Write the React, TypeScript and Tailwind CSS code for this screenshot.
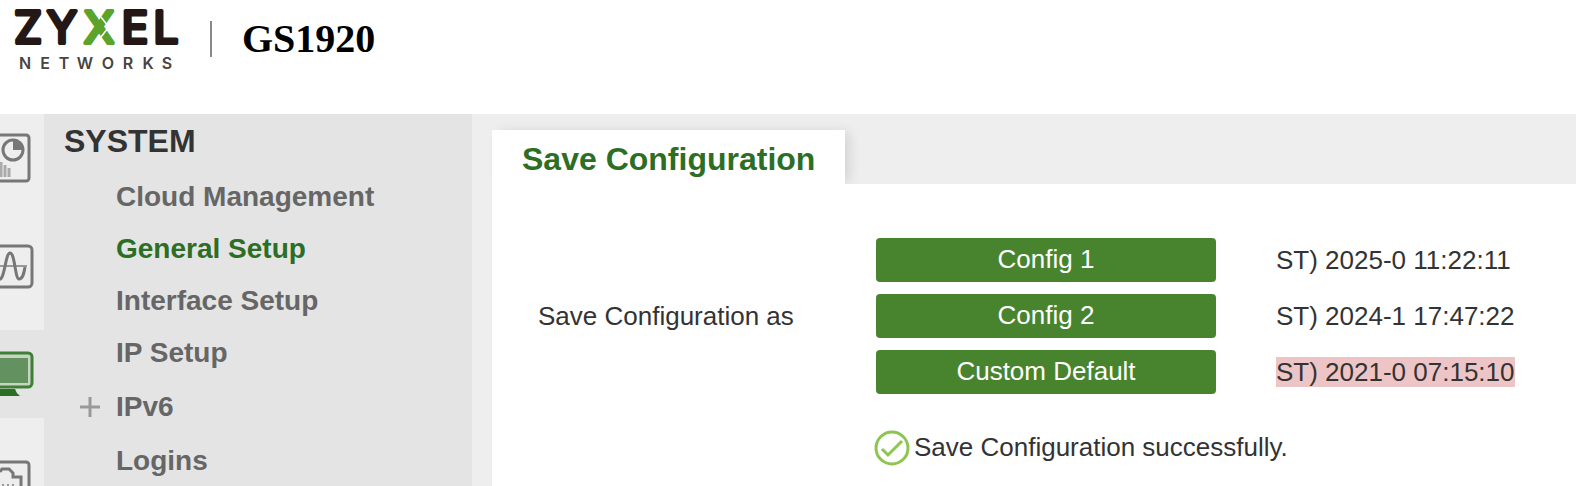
import { useState } from "react";
import clsx from "clsx";

const MENU_ITEMS = [
    { name: "Cloud Management" },
    { name: "General Setup" },
    { name: "Interface Setup" },
    { name: "IP Setup" },
    { name: "IPv6", expandable: true },
    { name: "Logins" },
];

const CONFIGS = [{
    name: "Config 1",
    savedAt: "ST) 2025-0 11:22:11",
}, {
    name: "Config 2",
    savedAt: "ST) 2024-1 17:47:22",
}, {
    name: "Custom Default",
    savedAt: "ST) 2021-0 07:15:10",
    highlight: true,
}];

const Logo = () => (
    <svg width="182" height="74" viewBox="0 0 182 74" role="img" aria-label="Zyxel Networks" className="shrink-0">
        <g fontFamily="Inter, sans-serif" fontSize="44" textAnchor="middle" fill="#231815" stroke="#231815" strokeWidth="4" strokeLinejoin="round">
            <text x="28" y="43">Z</text>
            <text x="62" y="43">Y</text>
            <text x="99" y="43" fill="#5ba32b" stroke="#5ba32b">X</text>
            <text x="135" y="43">E</text>
            <text x="166" y="43">L</text>
        </g>
        <path d="M101 17l7 9M108 28l-7 9" fill="none" stroke="#fff" strokeWidth="1.5" />
        <g fontFamily="Inter, sans-serif" fontSize="16" fontWeight="600" textAnchor="middle" fill="#4a4340">
            <text x="25 45 64 85 108 128 148 167" y="69">NETWORKS</text>
        </g>
    </svg>
);

// The rail icons run off the left edge of the window
const DashboardIcon = () => (
    <svg width="44" height="88" viewBox="0 0 44 88" fill="none" stroke="#777" strokeWidth="3">
        <rect x="-30" y="21" width="59" height="46" rx="3" />
        <circle cx="13" cy="36" r="10" strokeWidth="3" />
        <path d="M13 36V26a10 10 0 0 1 10 10z" fill="#777" stroke="none" />
        <path d="M1 48v15M5 51v12M9 54v9" stroke="#aaa" strokeWidth="3" />
    </svg>
);

const MonitorIcon = () => (
    <svg width="44" height="88" viewBox="0 0 44 88" fill="none" stroke="#777" strokeWidth="3">
        <rect x="-30" y="24" width="62" height="41" rx="4" />
        <path d="M0 44h27" stroke="#999" strokeWidth="2" />
        <path d="M-2 57C5 61 5 31 10 31S15 57 19 57s5-6 6-12" strokeWidth="3" />
    </svg>
);

const SystemIcon = () => (
    <svg width="44" height="88" viewBox="0 0 44 88">
        <rect x="-30" y="23" width="62" height="34" rx="4" fill="#c5d5c2" stroke="#3f7f36" strokeWidth="3" />
        <rect x="-30" y="28" width="58" height="25" fill="#649160" />
        <path d="M0 59h15q1 4 5 7H0z" fill="#2c6e24" />
    </svg>
);

const PortIcon = () => (
    <svg width="44" height="88" viewBox="0 0 44 88" fill="none" stroke="#777" strokeWidth="3">
        <rect x="-30" y="24" width="59" height="46" rx="3" />
        <path d="M0 34l2-3h7l4 4v4h8v26" />
        <path d="M3 46v8M8 46v8M13 46v8" stroke="#999" strokeWidth="2" />
    </svg>
);

const RAIL = [
    { name: "Dashboard", icon: <DashboardIcon /> },
    { name: "Monitor", icon: <MonitorIcon /> },
    { name: "System", icon: <SystemIcon /> },
    { name: "Port", icon: <PortIcon /> },
];

const Sidebar = () => {
    const [section, setSection] = useState("System");
    const [selected, setSelected] = useState("General Setup");

    return (
        <div className="flex shrink-0">
            <div className="flex w-11 flex-col gap-5 bg-[#eeeeee]">
                {RAIL.map((x) => (
                    <button
                        key={x.name}
                        aria-label={x.name}
                        className={clsx("shrink-0", section === x.name && "bg-[#e4e4e4]")}
                        onClick={() => setSection(x.name)}
                    >
                        {x.icon}
                    </button>
                ))}
            </div>
            <nav className="w-[428px] bg-[#e4e4e4] pt-[11px]">
                <h2 className="mb-3.5 pl-5 text-[32px] leading-8 font-bold text-[#333333]">SYSTEM</h2>
                <ul>
                    {MENU_ITEMS.map((item) => (
                        <li key={item.name} className={clsx("flex items-center", item.expandable ? "h-14" : "h-13")}>
                            <span className="flex w-[72px] justify-end pr-4">
                                {item.expandable && (
                                    <svg width="20" height="20" viewBox="0 0 20 20" stroke="#999" strokeWidth="3">
                                        <path d="M10 0v20M0 10h20" />
                                    </svg>
                                )}
                            </span>
                            <a
                                href="#"
                                className={clsx("text-[28px] leading-8 font-bold", selected === item.name ? "text-[#2c6e24]" : "text-[#666666]")}
                                onClick={() => setSelected(item.name)}
                            >
                                {item.name}
                            </a>
                        </li>
                    ))}
                </ul>
            </nav>
        </div>
    );
};

const SaveConfiguration = () => {
    const [saved, setSaved] = useState(true);

    return (
        <main className="flex min-w-0 flex-1 flex-col bg-[#eeeeee] pt-4 pl-5">
            <h1 className="self-start bg-white px-[30px] pt-[13px] pb-[9px] text-[32px] leading-8 font-bold whitespace-nowrap text-[#2c6e24] shadow-[6px_0px_12px_-2px_rgba(0,0,0,0.12)]">
                Save Configuration
            </h1>
            <div className="relative flex-1 bg-white pt-[54px] pl-[46px] text-[26px] leading-[30px] whitespace-nowrap text-[#333333]">
                <div className="flex items-center">
                    <span id="save-as" className="w-[338px] shrink-0">Save Configuration as</span>
                    <div role="group" aria-labelledby="save-as" className="flex flex-col gap-3">
                        {CONFIGS.map((config) => (
                            <div key={config.name} className="flex items-center gap-[60px]">
                                <button
                                    className="h-11 w-[340px] shrink-0 rounded bg-[#47842d] pb-0.5 text-white hover:bg-[#3c7225]"
                                    onClick={() => setSaved(true)}
                                >
                                    {config.name}
                                </button>
                                <span className={clsx(config.highlight && "bg-[#eec5c6]")}>{config.savedAt}</span>
                            </div>
                        ))}
                    </div>
                </div>
                {saved && (
                    <div role="status" className="mt-9 flex items-center gap-1 pl-[336px]">
                        <svg width="36" height="36" viewBox="0 0 36 36" fill="none" stroke="#8cc550" strokeWidth="3">
                            <circle cx="18" cy="18" r="16" />
                            <path d="M8 19l6 6 14-14" />
                        </svg>
                        <span className="pb-0.5">Save Configuration successfully.</span>
                    </div>
                )}
            </div>
        </main>
    );
};

export default function App() {
    return (
        <div className="flex h-screen flex-col overflow-hidden bg-white font-['Liberation_Sans',Arial,sans-serif]">
            <header className="flex h-[114px] shrink-0 items-start">
                <Logo />
                <div className="flex h-[78px] items-center">
                    <span className="ml-7 h-9 w-0.5 bg-[#888888]" />
                    <span className="ml-[30px] font-['Liberation_Serif','Times_New_Roman',serif] text-[40px] leading-10 font-bold text-black">GS1920</span>
                </div>
            </header>
            <div className="flex min-h-0 flex-1">
                <Sidebar />
                <SaveConfiguration />
            </div>
        </div>
    );
}
